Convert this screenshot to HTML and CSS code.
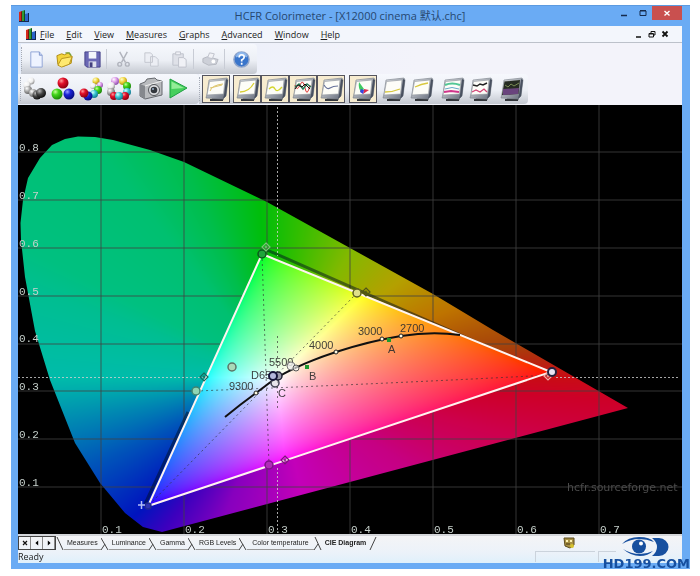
FILE: index.html
```html
<!DOCTYPE html>
<html lang="en">
<head>
<meta charset="utf-8">
<title>HCFR Colorimeter</title>
<link rel="stylesheet" href="styles.css">
</head>
<body>
<svg class="defs" aria-hidden="true">
  <defs>
    <linearGradient id="case" x1="0" y1="0" x2="1" y2="1"><stop offset="0" stop-color="#e8ebef"/><stop offset="1" stop-color="#626977"/></linearGradient>
    <radialGradient id="gRed" cx=".35" cy=".3" r=".7"><stop offset="0" stop-color="#ff9a9a"/><stop offset=".4" stop-color="#e3102a"/><stop offset="1" stop-color="#8f0010"/></radialGradient>
    <radialGradient id="gGreen" cx=".35" cy=".3" r=".7"><stop offset="0" stop-color="#c8ff9a"/><stop offset=".4" stop-color="#43d61c"/><stop offset="1" stop-color="#1c8a08"/></radialGradient>
    <radialGradient id="gBlue" cx=".35" cy=".3" r=".7"><stop offset="0" stop-color="#9aa4ff"/><stop offset=".4" stop-color="#1c22d6"/><stop offset="1" stop-color="#080c80"/></radialGradient>
    <radialGradient id="gDark" cx=".35" cy=".3" r=".7"><stop offset="0" stop-color="#bbb"/><stop offset=".5" stop-color="#444"/><stop offset="1" stop-color="#111"/></radialGradient>
    <radialGradient id="gGray" cx=".35" cy=".3" r=".7"><stop offset="0" stop-color="#fff"/><stop offset=".5" stop-color="#aaa"/><stop offset="1" stop-color="#666"/></radialGradient>
    <radialGradient id="gLight" cx=".35" cy=".3" r=".7"><stop offset="0" stop-color="#fff"/><stop offset=".6" stop-color="#eee"/><stop offset="1" stop-color="#999"/></radialGradient>
    <radialGradient id="gCyan" cx=".35" cy=".3" r=".7"><stop offset="0" stop-color="#d8ffff"/><stop offset=".5" stop-color="#37c4cf"/><stop offset="1" stop-color="#157c94"/></radialGradient>
    <radialGradient id="gYellow" cx=".35" cy=".3" r=".7"><stop offset="0" stop-color="#fffbd0"/><stop offset=".5" stop-color="#efd640"/><stop offset="1" stop-color="#b08d10"/></radialGradient>
    <radialGradient id="gPink" cx=".35" cy=".3" r=".7"><stop offset="0" stop-color="#fff"/><stop offset=".5" stop-color="#dc9be8"/><stop offset="1" stop-color="#9353ae"/></radialGradient>
    <symbol id="app" viewBox="0 0 12 12"><path fill="#d42a1e" d="M1 2l3-1v10H1z"/><path fill="#7a1510" d="M3 2l1-1v10H3z"/><path fill="#2f9a35" d="M4 1l3-1v11H4z"/><path fill="#124f1b" d="M6 1l1-1v11H6z"/><path fill="#2b62c8" d="M7 4l4-1v8H7z"/><path fill="#14264f" d="M10 3l1 0v8h-1zM1 11h10v1H1z"/></symbol>
    <symbol id="monitor" viewBox="0 0 25 25"><path fill="#777b80" d="M8 21l10-1 2 3-13 1z"/><path fill="#33363b" d="M6 22h13v2H6z"/><path fill="url(#case)" stroke="#777d87" stroke-width=".6" d="M5 3l18-2 1 2-2 16-3 3-17-1 1-4z"/><path fill="#495160" d="M22 2l2 1-2 16-3 3 1-4z"/><path class="screen" stroke="#8f949b" stroke-width=".6" d="M5.500 4.500L21 3l-1.500 14L3 18z"/></symbol>
  </defs>
</svg>

<main class="window">
  <header class="titlebar">
    <svg class="app-icon"><use href="#app"/></svg>
    <h1>HCFR Colorimeter - [X12000 cinema 默认.chc]</h1>
    <div class="caption">
      <button type="button" aria-label="Minimize"><svg viewBox="0 0 10 10"><path d="M2 7.500h6" stroke="#152b4d" stroke-width="1.500"/></svg></button>
      <button type="button" aria-label="Restore"><svg viewBox="0 0 10 10"><path d="M2 3h6v4.500H2zM2 2.500h6" fill="none" stroke="#152b4d"/></svg></button>
      <button type="button" class="close" aria-label="Close"><svg viewBox="0 0 10 10"><path d="M2.500 3l5 4.500M7.500 3l-5 4.500" stroke="#fff" stroke-width="1.400"/></svg></button>
    </div>
  </header>

  <nav class="menubar">
    <svg class="app-icon"><use href="#app"/></svg>
    <button type="button"><u>F</u>ile</button>
    <button type="button"><u>E</u>dit</button>
    <button type="button"><u>V</u>iew</button>
    <button type="button"><u>M</u>easures</button>
    <button type="button"><u>G</u>raphs</button>
    <button type="button"><u>A</u>dvanced</button>
    <button type="button"><u>W</u>indow</button>
    <button type="button"><u>H</u>elp</button>
    <div class="mdi">
      <button type="button" aria-label="Minimize document"><svg viewBox="0 0 10 10"><path d="M2 8h5" stroke="#111" stroke-width="1.500"/></svg></button>
      <button type="button" aria-label="Restore document"><svg viewBox="0 0 10 10"><path d="M4 4V2.500h4V6H7M2 4.500h4.500V8H2zM2 5h4" fill="none" stroke="#111"/></svg></button>
      <button type="button" aria-label="Close document"><svg viewBox="0 0 10 10"><path d="M2.500 2.500l5 5M7.500 2.500l-5 5" stroke="#111" stroke-width="1.800"/></svg></button>
    </div>
  </nav>

  <section class="bars">
    <div class="bar bar-file">
      <button type="button" aria-label="New"><svg viewBox="0 0 20 20"><path d="M4 2h9l3 3.500V18H4z" fill="#eef3ff" stroke="#8fa4d6"/><path d="M13 2v3.500h3" fill="#c6d4f4" stroke="#7f96ca"/></svg></button>
      <button type="button" aria-label="Open"><svg viewBox="0 0 20 20"><path d="M2 6l5-2 3 1 4-2 4 4-1 7-8 3-6-2z" fill="#f3d43c" stroke="#af8a12"/><path d="M3 16l4-7 11-2-3 8-8 3z" fill="#ffe970" stroke="#b8931c"/><path d="M11 3l4 0 2 3" fill="none" stroke="#7ba13b" stroke-width="1.500"/></svg></button>
      <button type="button" aria-label="Save"><svg viewBox="0 0 20 20"><path d="M2 2h16v16H4l-2-2z" fill="#6b68b5" stroke="#454087"/><path d="M6 2h8v7H6z" fill="#f4f5fb"/><path d="M6 12h8v6H6z" fill="#dfe1ee"/><path d="M7 13h3v5H7z" fill="#433f7e"/></svg></button>
      <i class="sep"></i>
      <button type="button" aria-label="Cut" disabled><svg viewBox="0 0 20 20"><g fill="none" stroke="#b1b4bd" stroke-width="1.500"><path d="M6 2l6 11M14 2L8 13"/><circle cx="6" cy="15" r="2"/><circle cx="14" cy="15" r="2"/></g></svg></button>
      <button type="button" aria-label="Copy" disabled><svg viewBox="0 0 20 20"><path d="M3 3h6l2 2v8H3zM9 7h5l3 3v7H9z" fill="#eceef4" stroke="#c3c6cf"/></svg></button>
      <button type="button" aria-label="Paste" disabled><svg viewBox="0 0 20 20"><path d="M3 4h11v12H3z" fill="#dfe1e8" stroke="#bfc2cb"/><path d="M6 2h5v3H6zM9 8h5l3 2v8H9z" fill="#f0f1f6" stroke="#bfc2cb"/></svg></button>
      <i class="sep"></i>
      <button type="button" aria-label="Print" disabled><svg viewBox="0 0 20 20"><path d="M2 9l5-2 11 3-2 5-8 1-6-3z" fill="#cdd0d8" stroke="#b4b7c0"/><path d="M7 8l2-5 5 1-2 5z" fill="#f1f2f6" stroke="#bfc2cb"/><circle cx="13" cy="12" r="2" fill="#fff"/></svg></button>
      <i class="sep"></i>
      <button type="button" aria-label="Help"><svg viewBox="0 0 20 20"><circle cx="10" cy="10" r="8" fill="#3975cb" stroke="#8fa5cb" stroke-width="1.500"/><path d="M4 8a6 6 0 0112 0q-6-3-12 0" fill="#8db8ee"/><path d="M7.500 8q0-3 2.700-3t2.600 2.500q0 1.500-2.600 3v1.500M10.200 13.500v2" fill="none" stroke="#fff" stroke-width="1.800"/></svg></button>
    </div>

    <div class="bar-row">
      <div class="bar bar-measure">
        <button type="button" aria-label="Measure grayscale"><svg viewBox="0 0 24 24"><circle cx="8" cy="4" r="3.500" fill="url(#gLight)"/><circle cx="4" cy="8" r="3.500" fill="url(#gLight)"/><circle cx="5" cy="13" r="4" fill="url(#gGray)"/><circle cx="10" cy="16" r="4" fill="url(#gGray)"/><circle cx="14" cy="18" r="4.500" fill="url(#gDark)"/><circle cx="18" cy="16" r="5" fill="url(#gDark)"/></svg></button>
        <button type="button" aria-label="Measure primaries"><svg viewBox="0 0 24 24"><circle cx="12" cy="6" r="5.500" fill="url(#gRed)"/><circle cx="6" cy="17" r="5.500" fill="url(#gGreen)"/><circle cx="18" cy="17" r="5.500" fill="url(#gBlue)"/></svg></button>
        <button type="button" aria-label="Measure saturations"><svg viewBox="0 0 24 24"><circle cx="17" cy="4" r="3.500" fill="url(#gYellow)"/><circle cx="21" cy="8" r="3" fill="url(#gPink)"/><circle cx="14" cy="9" r="3" fill="url(#gLight)"/><circle cx="19" cy="13" r="4" fill="url(#gGreen)"/><circle cx="15" cy="17" r="4" fill="url(#gCyan)"/><circle cx="9" cy="19" r="4.500" fill="url(#gBlue)"/><circle cx="5" cy="16" r="4.500" fill="url(#gRed)"/></svg></button>
        <button type="button" aria-label="Measure all colors"><svg viewBox="0 0 24 24"><circle cx="8" cy="4" r="4" fill="url(#gPink)"/><circle cx="16" cy="4" r="4" fill="url(#gYellow)"/><circle cx="4" cy="9" r="4" fill="url(#gLight)"/><circle cx="20" cy="9" r="4" fill="url(#gGreen)"/><circle cx="4" cy="15" r="4" fill="url(#gGray)"/><circle cx="20" cy="15" r="4" fill="url(#gCyan)"/><circle cx="7" cy="19" r="4" fill="url(#gRed)"/><circle cx="18" cy="19" r="4" fill="url(#gRed)"/><circle cx="12" cy="19" r="4" fill="url(#gCyan)"/></svg></button>
        <i class="gap"></i>
        <button type="button" aria-label="Camera"><svg viewBox="0 0 24 24"><path d="M1 7l5-2 2-3 8-1 2 2 5 1v14l-17 4-5-3z" fill="#b9bbbe" stroke="#66696e"/><path d="M1 7l5 2v13l-5-3z" fill="#85888d"/><path d="M6 9l17-5" stroke="#eee"/><circle cx="15" cy="13" r="5.500" fill="#dcdde0" stroke="#55585c"/><circle cx="15" cy="13" r="3.300" fill="#33373d"/><circle cx="14" cy="12" r="1" fill="#9db3ca"/></svg></button>
        <button type="button" aria-label="Run"><svg viewBox="0 0 24 24"><path d="M3 2l17 9L3 21z" fill="#46cf5d" stroke="#1f9f42"/><path d="M4.500 4.500L17 11l-12.500 1z" fill="#93ed98"/></svg></button>
      </div>

      <div class="bar bar-views">
        <button type="button" class="view on first" aria-label="Measures view"><svg viewBox="0 0 25 25"><use href="#monitor"/><path d="M6 14q2-6 13-7M6 11l12-3" fill="none" stroke="#dcc46b"/></svg></button>
        <button type="button" class="view on" aria-label="Luminance"><svg viewBox="0 0 25 25"><use href="#monitor"/><path d="M5 15q9 0 14-9" fill="none" stroke="#d8cf36" stroke-width="1.300"/></svg></button>
        <button type="button" class="view on" aria-label="Gamma"><svg viewBox="0 0 25 25"><use href="#monitor"/><path d="M6 12q4-4 6 0t7-2" fill="none" stroke="#d3d52f" stroke-width="1.300"/></svg></button>
        <button type="button" class="view on" aria-label="RGB levels"><svg viewBox="0 0 25 25"><use href="#monitor"/><path d="M4 8q2 7 5 0t5 3 5-3" fill="none" stroke="#d33"/><path d="M4 10l4-3 4 5 4-5 4 3" fill="none" stroke="#287c55" stroke-width="1.500"/><path d="M4 12l3-4 4 2 3-3 5 5" fill="none" stroke="#111"/></svg></button>
        <button type="button" class="view on" aria-label="Color temperature"><svg viewBox="0 0 25 25"><use href="#monitor"/><path d="M5 8q3 5 6 3t8-2" fill="none" stroke="#68739b" stroke-width="1.200"/></svg></button>
        <button type="button" class="view on cie" aria-label="CIE diagram"><svg viewBox="0 0 25 25"><use href="#monitor"/><path d="M8 5l5 7-3 3q-3-4-2-10" fill="#3fca61"/><path d="M13 12l5 1-6 4z" fill="#dc2c4d"/><path d="M10 12l3 1-1 4-3-2z" fill="#3645df"/></svg></button>
        <button type="button" class="view" aria-label="Near black"><svg viewBox="0 0 25 25"><use href="#monitor"/><path d="M4 15q8 0 15-3" fill="none" stroke="#d8c83e" stroke-width="1.300"/></svg></button>
        <button type="button" class="view" aria-label="Near white"><svg viewBox="0 0 25 25"><use href="#monitor"/><path d="M6 10q6-3 13-4" fill="none" stroke="#d8c83e" stroke-width="1.300"/></svg></button>
        <button type="button" class="view group" aria-label="Saturation luminance"><svg viewBox="0 0 25 25"><use href="#monitor"/><path d="M5 8q7-3 15 0" fill="none" stroke="#52c795" stroke-width="2"/><path d="M5 12q7-3 14 0" fill="none" stroke="#65a9c9"/><path d="M4 15l7-1 8 1" fill="none" stroke="#d0358b" stroke-width="2"/></svg></button>
        <button type="button" class="view" aria-label="Saturation shift"><svg viewBox="0 0 25 25"><use href="#monitor"/><path d="M5 8l4 1 3-2 3 1 4-2" fill="none" stroke="#222" stroke-width="1.500"/><path d="M4 15l4-2 4 2 4-3 3 3" fill="none" stroke="#d24576" stroke-width="1.300"/></svg></button>
        <button type="button" class="view group" aria-label="Free measures"><svg viewBox="0 0 25 25"><use href="#monitor"/><path d="M5.500 4.500L21 3l-1.500 14L3 18z" fill="#252b22"/><path d="M4 12l16-1-1 6-15 1z" fill="#69447d"/><path d="M6 8l3 2 3-3 3 2 5-3" fill="none" stroke="#788a54"/></svg></button>
      </div>
    </div>
  </section>

  <section class="plot" aria-label="CIE Diagram">
    <canvas id="gamut" width="664" height="429"></canvas>
    <svg viewBox="18 105 664 429">
      <defs>
        <clipPath id="outside"><path clip-rule="evenodd" d="M18 105h664v429H18zM262 254L551 372 148 506z"/></clipPath>
        <g id="target" fill="none" stroke-width="1.200"><path d="M0-4l4 4-4 4-4-4z"/><path d="M-1.500 0h3M0-1.500v3"/></g>
      </defs>
      <g clip-path="url(#outside)">
        <path class="grid" d="M101 105v429M184 105v429M267 105v429M350 105v429M433 105v429M516 105v429M599 105v429M18 152h664M18 200h664M18 248h664M18 296h664M18 344h664M18 391h664M18 439h664M18 487h664"/>
        <path class="reference" d="M267 250L549 374M188 412L145 504"/>
      </g>
      <path class="crosshair" d="M277.500 107V256M277.500 468V532M18 377.500H204M556 377.500H678"/>
      <path class="diagonals" d="M262 254L269 465M357 293L148 506M196 391Q380 384 551 375M277.500 336V410"/>
      <path class="measured" d="M262 254L551 372 148 506z"/>
      <path class="planckian" d="M225 417L240 405 256 393 276 378Q302 363 336 352T401 336T460 335"/>
      <g class="temps">
        <text x="229" y="390">9300</text><text x="251" y="379">D65</text><text x="269" y="366">5500</text><text x="309" y="349">4000</text><text x="358" y="335">3000</text><text x="400" y="332">2700</text>
        <text x="388" y="353">A</text><text x="309" y="380">B</text><text x="278" y="397">C</text>
      </g>
      <g fill="#1c9a2f"><rect x="387" y="338" width="4" height="4"/><rect x="305" y="365" width="4" height="4"/></g>
      <g fill="#fffbe4" stroke="#222" stroke-width="1"><circle cx="256" cy="393" r="2"/><circle cx="336" cy="352" r="2"/><circle cx="382" cy="339" r="2"/><circle cx="401" cy="336" r="2"/></g>
      <circle cx="262" cy="254" r="4" fill="#1ea53a" stroke="#0b5a1d" stroke-width="1.500"/>
      <use href="#target" x="266" y="247" stroke="#7fc07a"/>
      <circle cx="357" cy="293" r="4" fill="#dfe08a" stroke="#5d6020" stroke-width="1.500"/>
      <use href="#target" x="366" y="292" stroke="#50531a"/>
      <circle cx="196" cy="391" r="4" fill="#8fd5b4" stroke="#3f8570" stroke-width="1.500"/>
      <use href="#target" x="204" y="377" stroke="#186a5e"/>
      <circle cx="232" cy="367" r="4" fill="#a9d9b8" stroke="#5b7568" stroke-width="1.500"/>
      <circle cx="269" cy="465" r="4" fill="#b02bb9" stroke="#7c1389" stroke-width="1.500"/>
      <use href="#target" x="285" y="460" stroke="#7c1a78"/>
      <circle cx="148" cy="506" r="3" fill="#3034b5" stroke="#222a90" stroke-width="1.500"/>
      <path d="M138 505h7M141.500 501v8" stroke="#b3bdf5" stroke-width="1.500"/>
      <circle cx="291" cy="366" r="4" fill="#eee" fill-opacity=".8" stroke="#777"/>
      <circle cx="296" cy="368" r="3" fill="#fff" fill-opacity=".6" stroke="#555"/>
      <circle cx="275" cy="383" r="4" fill="#ddd" fill-opacity=".6" stroke="#445" stroke-width="1.500"/>
      <circle cx="278" cy="376" r="4" fill="#99a" stroke="#223" stroke-width="1.500"/>
      <circle cx="273" cy="376" r="4" fill="#b4b8dc" stroke="#16163a" stroke-width="2"/>
      <use href="#target" x="548" y="376" stroke="#f0b0a8"/>
      <circle cx="552" cy="372" r="4" fill="#e9e4f4" stroke="#252340" stroke-width="2"/>
      <g class="axis">
        <text x="19" y="151">0.8</text><text x="19" y="199">0.7</text><text x="19" y="247">0.6</text><text x="19" y="295">0.5</text><text x="19" y="342">0.4</text><text x="19" y="390">0.3</text><text x="19" y="438">0.2</text><text x="19" y="486">0.1</text>
        <text x="102" y="533">0.1</text><text x="185" y="533">0.2</text><text x="268" y="533">0.3</text><text x="351" y="533">0.4</text><text x="434" y="533">0.5</text><text x="517" y="533">0.6</text><text x="600" y="533">0.7</text>
      </g>
      <text class="credit" x="567" y="491">hcfr.sourceforge.net</text>
    </svg>
  </section>

  <footer>
    <nav class="tabs">
      <div class="tab-nav">
        <button type="button" aria-label="Close tab"><svg viewBox="0 0 10 10"><path d="M2.500 2.500l5 5M7.500 2.500l-5 5" stroke="#111" stroke-width="1.500"/></svg></button>
        <button type="button" aria-label="Previous tab"><svg viewBox="0 0 10 10"><path d="M6.500 2v6L3 5z"/></svg></button>
        <button type="button" aria-label="Next tab"><svg viewBox="0 0 10 10"><path d="M3.500 2v6L7 5z"/></svg></button>
      </div>
      <svg class="slant" viewBox="0 0 8 13"><path d="M1 0l6 13"/></svg>
      <button type="button">Measures</button>
      <svg class="slant" viewBox="0 0 8 13"><path d="M0 1l7 12M0 13l4-6"/></svg>
      <button type="button">Luminance</button>
      <svg class="slant" viewBox="0 0 8 13"><path d="M0 1l7 12M0 13l4-6"/></svg>
      <button type="button">Gamma</button>
      <svg class="slant" viewBox="0 0 8 13"><path d="M0 1l7 12M0 13l4-6"/></svg>
      <button type="button">RGB Levels</button>
      <svg class="slant" viewBox="0 0 8 13"><path d="M0 1l7 12M0 13l4-6"/></svg>
      <button type="button" class="wide">Color temperature</button>
      <svg class="slant" viewBox="0 0 8 13"><path d="M1 0l6 13M0 13l4-6"/></svg>
      <button type="button" class="active">CIE Diagram</button>
      <svg class="slant" viewBox="0 0 8 13"><path d="M7 0L1 13"/></svg>
      <svg class="sensor" viewBox="0 0 12 12"><path d="M1 1h10v7l-4 3-5-2z" fill="#a99245" stroke="#5b4b1d"/><path d="M3 3h2v2H3zM7 3h2v2H7z" fill="#fff3b5"/><circle cx="9" cy="9" r="2" fill="#d6c22e"/><path d="M3 7h4" stroke="#45320e"/></svg>
    </nav>
    <div class="status"><span>Ready</span><i class="pane"></i><i class="pane short"></i></div>
  </footer>

  <a class="brand" href="#">
    <svg viewBox="0 0 48 20"><path d="M0 7Q6 0 17 0T32 5Q25 2 17 2T0 7z" fill="#164f9f"/><path d="M1 12q8 7 17 7 8 0 13-5-6 3-13 3-9 0-17-5z" fill="#164f9f"/><path d="M30 1h7a9.500 9 0 010 18h-7q5-4 5-9t-5-9z" fill="#164f9f"/><circle cx="17" cy="9.500" r="7" fill="#164f9f"/><circle cx="19" cy="6.500" r="2" fill="#fff"/></svg>
    <span>HD199.COM</span>
  </a>
</main>
<script src="gamut.js"></script>
</body>
</html>
```

FILE: styles.css
```css
* { box-sizing: border-box; }
body {
  margin: 0;
  padding: 5px 10px 6px 11px;
  background: #fff;
  color: #222;
  font-family: "Open Sans", "Noto Sans CJK SC", sans-serif;
}
button {
  display: flex;
  align-items: center;
  justify-content: center;
  padding: 0;
  border: 0;
  background: none;
  color: inherit;
  font: inherit;
}
svg { display: block; }
.defs { position: absolute; width: 0; height: 0; }
.window {
  position: relative;
  padding: 0 8px 6px 7px;
  background: #6aabf4;
  border-top: 1px solid #5b9ae0;
}
.titlebar {
  display: grid;
  grid-template-columns: 1fr auto 1fr;
  align-items: center;
  height: 20px;
}
.titlebar h1 {
  margin: 0;
  color: #26476f;
  font-size: 11px;
  font-weight: 400;
  line-height: 18px;
}
.app-icon { width: 12px; height: 12px; }
.caption { display: flex; align-self: start; justify-content: flex-end; }
.caption button { width: 19px; height: 14px; }
.caption svg { width: 10px; height: 10px; }
.caption .close { width: 30px; background: #c9504f; }
.menubar {
  display: flex;
  align-items: center;
  gap: 12px;
  height: 17px;
  padding: 0 12px 0 7px;
  background: #f3f6fc;
  border-bottom: 1px solid #bcc1ca;
  font-size: 9px;
}
.menubar > .app-icon { margin-right: -9px; }
.mdi { display: flex; gap: 3px; margin-left: auto; }
.mdi svg { width: 10px; height: 10px; }
.bars {
  padding: 1px 0;
  background: linear-gradient(90deg, #e6edfa, #f3f3fa 60%);
}
.bar {
  display: flex;
  align-items: center;
  height: 30px;
  border-radius: 0 4px 4px 0;
  background: linear-gradient(#f6f8fd, #eceff5 55%, #c4c8d0);
}
.bar::before {
  content: "";
  align-self: stretch;
  margin: 3px 0;
  border-left: 1px dotted #a5abb7;
}
.bar-file { width: 236px; margin-left: 3px; }
.bar-file button { width: 28px; }
.bar-file button svg { width: 19px; height: 19px; }
.sep { height: 20px; margin-right: 2px; border-left: 1px solid #c8ccd5; }
.bar-row { display: flex; }
.bar-measure { width: 181px; padding-left: 2px; }
.bar-measure button { width: 28px; }
.bar-measure svg { width: 24px; height: 24px; }
.gap { width: 4px; }
.bar-views { padding-right: 3px; }
.view { width: 28px; height: 28px; }
.view svg { width: 25px; height: 25px; }
.screen { fill: #fdfdf8; }
.on { background: #f7ecd0; border: 1px solid #55555f; }
.first { margin: 0 3px 0 2px; }
.cie { margin: 0 2px 0 4px; }
.group { margin-left: 3px; }
.plot { display: grid; background: #000; }
.plot > * { grid-area: 1 / 1; width: 100%; height: auto; }
.grid { fill: none; stroke: #424242; stroke-opacity: .8; }
.reference { fill: none; stroke: #001020; stroke-opacity: .5; stroke-width: 3; }
.crosshair { fill: none; stroke: #d0d0d0; stroke-opacity: .8; stroke-dasharray: 2 2; }
.diagonals { fill: none; stroke: #303030; stroke-opacity: .65; stroke-dasharray: 2 3; }
.measured { fill: none; stroke: #fff4f0; stroke-width: 2; }
.planckian { fill: none; stroke: #111; stroke-width: 2; }
.temps { fill: #2e2e2e; fill-opacity: .9; font: 11px "Liberation Sans", sans-serif; }
.axis { fill: #c6d0cb; font: 11px "Liberation Mono", monospace; }
.credit { fill: #4a4a4a; font: 11px "DejaVu Sans", sans-serif; }
footer { background: linear-gradient(#f4f4f6, #ecf2f9 60%, #dff0fb); border-top: 2px solid #d4d6da; }
.tabs {
  display: flex;
  align-items: center;
  height: 14px;
  font: 7px "Liberation Sans", sans-serif;
}
.tab-nav { display: flex; border: 1px solid #444; }
.tab-nav button { width: 12px; height: 12px; border-right: 1px solid #888; }
.tab-nav svg { width: 8px; height: 8px; }
.slant { width: 8px; height: 13px; }
.slant path { fill: none; stroke: #444; }
.tabs > button { height: 13px; padding: 0 3px; border-bottom: 1px solid #999; }
.tabs > .wide { padding: 0 5px; }
.tabs > .active { border-color: transparent; font-weight: 700; }
.sensor { width: 12px; height: 12px; margin: 0 107px 0 auto; }
.status {
  display: flex;
  align-items: center;
  gap: 3px;
  height: 13px;
  padding-right: 66px;
  font-size: 9px;
  line-height: 13px;
}
.status span { margin-right: auto; }
.pane { width: 60px; height: 11px; border: 1px solid #cbd3dc; border-width: 1px 0 0 1px; }
.pane.short { width: 18px; }
.brand {
  position: absolute;
  right: 0;
  bottom: -1px;
  color: #164f9f;
  font: 700 13px/12px "DejaVu Sans", sans-serif;
  text-decoration: none;
}
.brand svg { width: 48px; height: 20px; margin: 0 auto 1px; }
.brand span { display: block; }
```

FILE: gamut.js
```js
// Paints the chromaticity diagram: true sRGB colours inside the measured
// triangle, a darker hue wheel around the white point outside it.
const canvas = document.getElementById("gamut");
const ctx = canvas.getContext("2d");
const W = canvas.width, H = canvas.height;

const locus = [
  [162, 532], [143, 527], [125, 513], [100, 483], [75, 443], [50, 380], [35, 331],
  [25, 277], [21, 240], [20.5, 223], [23, 200], [28, 178], [40, 158], [52, 145],
  [65, 139], [78, 136.5], [95, 137], [113, 140], [150, 150], [184, 162],
  [267, 202], [350, 248], [433, 294], [493, 330], [628, 408]
];
const triangle = [[262, 254], [551, 372], [148, 506]];
const white = [277, 377];

// Sample points and the colour of the ray that passes through each.
const wheel = [
  [[262, 230], [0, 190, 10]], [[200, 200], [0, 190, 75]], [[100, 152], [0, 192, 112]],
  [[30, 250], [0, 192, 128]], [[60, 300], [0, 190, 145]], [[60, 377], [0, 188, 170]],
  [[80, 420], [0, 135, 178]], [[120, 450], [0, 85, 185]], [[150, 500], [0, 20, 190]],
  [[165, 527], [60, 0, 190]], [[230, 500], [135, 0, 190]], [[300, 490], [195, 0, 185]],
  [[400, 460], [198, 0, 130]], [[500, 430], [205, 0, 75]], [[610, 400], [205, 0, 40]],
  [[580, 377], [200, 12, 20]], [[520, 345], [165, 65, 10]], [[450, 310], [190, 115, 0]],
  [[400, 280], [180, 160, 0]], [[350, 250], [130, 185, 0]], [[300, 220], [50, 190, 0]]
].map(([p, color]) => ({ angle: Math.atan2(p[1] - white[1], p[0] - white[0]), color }))
  .sort((a, b) => a.angle - b.angle);

const TURN = Math.PI * 2;
function hue(angle) {
  let k = wheel.findIndex(s => s.angle > angle);
  if (k < 0) k = 0;
  const b = wheel[k], a = wheel[(k + wheel.length - 1) % wheel.length];
  const span = (b.angle - a.angle + TURN) % TURN;
  const t = ((angle - a.angle + TURN) % TURN) / span;
  return a.color.map((v, c) => v + (b.color[c] - v) * t);
}

const side = (p, a, b) => (b[0] - a[0]) * (p[1] - a[1]) - (b[1] - a[1]) * (p[0] - a[0]);
const inTriangle = p => triangle.every((a, i) => side(p, a, triangle[(i + 1) % 3]) >= 0);

function inner(i, j) {
  const x = i / 830, y = (429 - j) / 477.5, z = 1 - x - y;
  const rgb = [
    3.2406 * x - 1.5372 * y - 0.4986 * z,
    -0.9689 * x + 1.8758 * y + 0.0415 * z,
    0.0557 * x - 0.2040 * y + 1.0570 * z
  ].map(v => Math.max(v, 0));
  const max = Math.max(...rgb);
  return rgb.map(v => 255 * Math.pow(v / max, 1 / 1.8));
}

const image = ctx.createImageData(W, H);
for (let j = 0; j < H; j++) {
  for (let i = 0; i < W; i++) {
    const p = [i + 18, j + 105];
    const rgb = inTriangle(p) ? inner(i, j) : hue(Math.atan2(p[1] - white[1], p[0] - white[0]));
    image.data.set([...rgb, 255], (j * W + i) * 4);
  }
}
ctx.putImageData(image, 0, 0);

ctx.globalCompositeOperation = "destination-in";
ctx.beginPath();
locus.forEach(([px, py]) => ctx.lineTo(px - 18, py - 105));
ctx.closePath();
ctx.fill();
```
